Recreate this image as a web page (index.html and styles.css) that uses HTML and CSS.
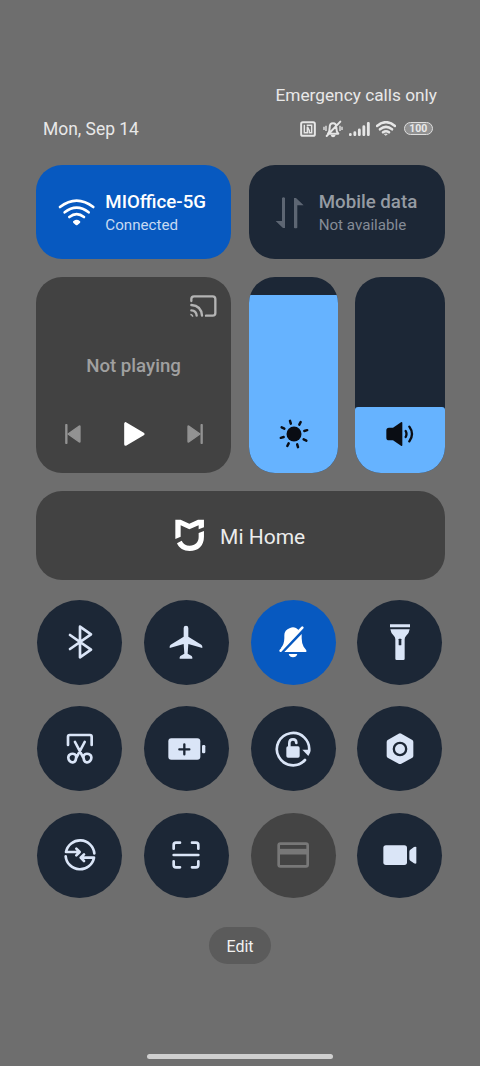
FILE: index.html
```html
<!DOCTYPE html>
<html lang="en">
<head>
<meta charset="utf-8">
<title>Control center</title>
<link rel="stylesheet" href="styles.css">
</head>
<body>
<main class="screen">
  <header class="header">
    <div class="carrier">Emergency calls only</div>
    <div class="status-row">
      <div class="date">Mon, Sep 14</div>
      <div class="status-icons">
        <svg class="i-nfc" viewBox="0 0 48 48"><rect x="3.5" y="3.5" width="41" height="41" rx="5" fill="none" stroke="#e6e6e6" stroke-width="6"/><path d="M13 11V35H22V17L28 29M20 13H35V35H28V27" fill="none" stroke="#e6e6e6" stroke-width="4.500"/></svg>
        <svg class="i-mute" viewBox="0 0 60 54"><path d="M15 41Q20 35 20 23Q20 10 30 10Q40 10 40 23Q40 35 46 41ZM52 5L11 48" fill="none" stroke="#e6e6e6" stroke-width="6" stroke-linecap="round" stroke-linejoin="round"/><path d="M23 45H38Q36 52 30 52Q25 52 23 45Z" fill="#e6e6e6"/><path d="M9 17V33M3 20V30M51 17V33M57 20V30" stroke="#e6e6e6" stroke-width="4"/></svg>
        <svg class="i-signal" viewBox="0 0 63 42" stroke="#e6e6e6" stroke-width="8.500" stroke-linecap="round"><path d="M4 37.500V38M17.500 32V38M31 24V38M44.500 14V38M58 4V38"/></svg>
        <svg class="i-wifi" viewBox="0 0 60 45" fill="none" stroke="#e6e6e6" stroke-width="7.500" stroke-linecap="round"><path d="M3 15Q30 -8 57 15M12 25Q30 10 48 25M21 34Q30 27 39 34"/><path d="M26 39H34L30 43Z" fill="#e6e6e6" stroke-width="2"/></svg>
        <span class="battery">100</span>
      </div>
    </div>
  </header>

  <section class="cards">
    <div class="card network on">
      <svg class="net-icon" viewBox="-56 -44 112 88" fill="none" stroke="#fff" stroke-width="8" stroke-linecap="round"><path d="M-50 -17Q0 -55 50 -17M-36 -1Q0 -29 36 -1M-22 13Q0 -4 22 13"/><path d="M-7 28Q0 23 7 28L0 34Z" fill="#fff" stroke-linejoin="round"/></svg>
      <div class="net-text"><div class="net-title">MIOffice-5G</div><div class="net-sub">Connected</div></div>
    </div>
    <div class="card network off">
      <svg class="net-icon" viewBox="-58 -44 112 88" fill="#5d6673"><path d="M-25 -44Q-20 -48 -16 -44V46H-22L-44 25H-25ZM11 45V-44H17L40 -22H21V45Q16 49 11 45Z"/></svg>
      <div class="net-text"><div class="net-title">Mobile data</div><div class="net-sub">Not available</div></div>
    </div>
    <div class="card media">
      <svg class="cast" viewBox="0 0 80 66" fill="none" stroke="#b4b4b4" stroke-width="7" stroke-linecap="round"><path d="M4 18V12Q4 4 12 4H68Q76 4 76 12V54Q76 62 68 62H48"/><path d="M4 30Q34 32 36 62M4 46Q19 47 20 62"/><path d="M1 56Q10 57 10 65H6Q5 61 1 61Z" fill="#b4b4b4" stroke="none"/></svg>
      <div class="media-title">Not playing</div>
      <div class="controls">
        <svg class="skip" viewBox="0 0 48 60"><path d="M4 3V57" stroke="#929292" stroke-width="7" stroke-linecap="round"/><path d="M9 30L43 6Q45 5 45 8V52Q45 55 43 54Z" fill="#929292" stroke="#929292" stroke-width="4" stroke-linejoin="round"/></svg>
        <svg class="play" viewBox="0 0 62 72"><path d="M5 5V67L57 36Z" fill="#fff" stroke="#fff" stroke-width="9" stroke-linejoin="round"/></svg>
        <svg class="skip" viewBox="0 0 48 60"><path d="M44 3V57" stroke="#929292" stroke-width="7" stroke-linecap="round"/><path d="M39 30L5 6Q3 5 3 8V52Q3 55 5 54Z" fill="#929292" stroke="#929292" stroke-width="4" stroke-linejoin="round"/></svg>
      </div>
    </div>
    <div class="sliders">
      <div class="card slider"><div class="fill bright">
        <svg class="slider-icon" viewBox="-45 -45 90 90"><circle r="22.500" fill="#0a0d14"/><path d="M-9.500 -31L-12 -39.500M-29 -16L-37 -20M-31 9L-39.500 11.500M-16 28L-20 36M9.500 31L12 39.500M29 16L37 20M31 -9L39.500 -11.500M16 -28L20 -36" stroke="#0a0d14" stroke-width="7.500" stroke-linecap="round"/></svg>
      </div></div>
      <div class="card slider"><div class="fill volume">
        <svg class="slider-icon" viewBox="-45 -45 90 90"><path d="M-33 -19H-21L3 -35Q7 -38 7 -33V33Q7 38 3 35L-21 19H-33Q-41 19 -41 11V-11Q-41 -19 -33 -19Z" fill="#0a0d14"/><path d="M17 -9Q22 0 17 9M28 -22Q44 0 28 22" fill="none" stroke="#0a0d14" stroke-width="7" stroke-linecap="round"/></svg>
      </div></div>
    </div>
    <div class="card home">
      <svg class="mi" viewBox="0 0 88 98"><path d="M1 2H17L43 14L69 2H87V25L71 31V19L43 31L17 19V53L1 60Z" fill="#fff"/><path d="M71 42L87 36V53C87 80 70 96 44 96C26 96 12 88 6 73L20 65C25 76 33 80 44 80C61 80 71 70 71 54Z" fill="#fff"/></svg>
      <span>Mi Home</span>
    </div>
  </section>

  <section class="toggles">
    <div class="toggle"><svg viewBox="-72 -72 144 144"><path class="line" d="M-30 -21L33 23L0 46V-46L33 -23L-30 21"/></svg></div>
    <div class="toggle"><svg viewBox="-72 -72 144 144"><path class="solid" d="M-7 -42Q-7 -49 0 -49Q7 -49 7 -42V-16L46 8Q50 11 49 18L7 6L5 35L17 42Q20 45 19 50H-19Q-20 45 -17 42L-5 35L-7 6L-49 18Q-50 11 -46 8L-7 -16Z"/></svg></div>
    <div class="toggle active"><svg viewBox="-72 -72 144 144"><path class="solid" d="M-36 18Q-26 6 -26 -12V-20Q-26 -36 -9 -42Q0 -47 9 -42L17 -36L-30 22ZM26 -24V-11Q26 4 32 14L40 25V30H-26ZM-13 36H13Q10 46 0 46Q-10 46 -13 36Z"/><path class="line" d="M-37 26L28 -43"/></svg></div>
    <div class="toggle"><svg viewBox="-72 -72 144 144"><path class="solid" d="M-30 -53H30V-44H-30ZM-29 -38H29Q28 -27 18 -18Q14 -14 14 -8V50Q14 54 10 54H-10Q-14 54 -14 50V-8Q-14 -14 -18 -18Q-28 -27 -29 -38Z"/><rect class="hole" x="-4" y="-10" width="8" height="20" rx="2"/></svg></div>

    <div class="toggle"><svg viewBox="-72 -72 144 144"><path class="line" d="M-36 -12V-37Q-36 -42 -31 -42H30Q35 -42 35 -37V-12M-15 -21L11 28M14 -21L-12 28M11 28C8 15 18 13 26 15C36 18 36 30 30 36C24 42 12 42 11 28ZM-12 28C-9 15 -19 13 -27 15C-37 18 -37 30 -31 36C-25 42 -13 42 -12 28Z"/></svg></div>
    <div class="toggle"><svg viewBox="-72 -72 144 144"><rect class="solid" x="-53" y="-32" width="96" height="64" rx="9"/><rect class="solid" x="48" y="-12" width="10" height="25" rx="4"/><path class="cut" d="M-20 1H10M-5 -14V16"/></svg></div>
    <div class="toggle"><svg viewBox="-72 -72 144 144"><path class="line" d="M36 33A48.500 48.500 0 1 1 48 8"/><path class="solid" d="M28 2H52Q52 13 46 21Z"/><rect class="solid" x="-20" y="-8" width="40" height="34" rx="5"/><path class="line" d="M-11 -8V-17Q-11 -29 0 -29Q10 -29 10 -18"/></svg></div>
    <div class="toggle"><svg viewBox="-72 -72 144 144"><path class="solid" d="M-4 -46Q0 -48 4 -46L37 -27Q40 -25 40 -21V20Q40 24 37 26L4 44Q0 46 -4 44L-37 26Q-40 24 -40 20V-21Q-40 -25 -37 -27Z"/><circle class="cut" r="18.500"/></svg></div>

    <div class="toggle"><svg viewBox="-72 -72 144 144"><path class="line" d="M43 -5A43 43 0 0 0 -42 -9H-3M-11 -19L-1 -9L-11 1M-43 4A43 43 0 0 0 42 8H3M12 -2L2 8L12 18"/></svg></div>
    <div class="toggle"><svg viewBox="-72 -72 144 144"><path class="line" d="M-37 -19V-30Q-37 -37 -30 -37H-18M18 -37H30Q37 -37 37 -30V-19M37 19V30Q37 37 30 37H18M-18 37H-30Q-37 37 -37 30V19M-37 0H37"/></svg></div>
    <div class="toggle disabled"><svg viewBox="-72 -72 144 144"><rect x="-43" y="-34" width="87" height="68" rx="5" fill="none" stroke="#787878" stroke-width="8"/><path d="M-43 -10H43" stroke="#787878" stroke-width="17"/></svg></div>
    <div class="toggle"><svg viewBox="-72 -72 144 144"><rect class="solid" x="-50" y="-29" width="71" height="59" rx="8"/><path class="solid" d="M28 -10Q28 -14 31 -16L42 -24Q46 -26 49 -24V25Q46 27 42 25L31 17Q28 15 28 11Z"/></svg></div>
  </section>

  <button class="edit">Edit</button>
  <div class="home-bar"></div>
</main>
</body>
</html>
```
FILE: styles.css
```css
* { box-sizing: border-box; }
body { margin: 0; background: #6e6e6e; font-family: Roboto, "Liberation Sans", sans-serif; }
svg { display: block; flex: none; }
.screen { width: 480px; height: 1066px; padding: 83px 35.5px 7px; display: flex; flex-direction: column; overflow: hidden; }
.header { height: 82px; padding: 0 7.5px; color: #e8e8e8; }
.carrier { height: 24px; line-height: 24px; text-align: right; font-size: 17.3px; }
.status-row { display: flex; justify-content: space-between; height: 43px; padding-right: 4.500px; }
.date { font-size: 17.450px; line-height: 44px; }
.status-icons { display: flex; align-items: center; height: 43px; }
.i-nfc { width: 16px; height: 16px; }
.i-mute { width: 20px; height: 18px; margin-left: 7px; }
.i-signal { width: 21px; height: 14px; margin-left: 6.500px; }
.i-wifi { width: 20px; height: 15px; margin-left: 6px; }
.battery { width: 28.500px; height: 13px; margin-left: 8px; border: 1.500px solid #dedede; border-radius: 7px; background: #919191; font-size: 10.500px; font-weight: 700; line-height: 11.500px; text-align: center; }

.cards { display: grid; grid-template-columns: 1fr 1fr; grid-template-rows: 94.300px 195.700px 89.300px; gap: 17.800px; }
.card { border-radius: 26px; background: #424242; overflow: hidden; }
.network { display: flex; align-items: center; padding-left: 22.500px; gap: 10px; }
.network.on { background: #0759c0; color: #fff; }
.network.off { background: #1c2736; color: #959ba3; }
.net-icon { width: 37.300px; height: 29.300px; overflow: visible; }
.net-text { padding-top: 3px; }
.net-title { font-size: 18.700px; font-weight: 500; line-height: 23px; }
.net-sub { font-size: 15.150px; line-height: 22px; color: #c6d9f2; }
.off .net-sub { color: #858c96; }
.media { display: flex; flex-direction: column; padding: 17.700px 28.500px 0 29px; }
.cast { width: 26.700px; height: 22px; margin-left: auto; margin-right: -14px; }
.media-title { margin-top: 36px; line-height: 26px; font-size: 18.700px; font-weight: 500; text-align: center; color: #a0a0a0; }
.controls { display: flex; justify-content: space-between; align-items: center; height: 24px; margin-top: 43.300px; }
.skip { width: 16px; height: 20px; }
.play { width: 20.700px; height: 24px; margin-left: 2px; }
.sliders { display: grid; grid-template-columns: 1fr 1fr; gap: 17.500px; }
.slider { background: #1c2736; display: flex; flex-direction: column; justify-content: flex-end; }
.fill { background: #66b3ff; display: flex; justify-content: center; align-items: flex-end; padding: 0 0 24px 1px; }
.bright { height: 178px; }
.volume { height: 65.300px; border-radius: 3px 3px 0 0; }
.slider-icon { width: 30px; height: 30px; }
.home { grid-column: 1 / 3; display: flex; justify-content: center; align-items: center; gap: 16px; padding-top: 1px; font-size: 21px; color: #ececec; }
.home span { padding-top: 2px; }
.mi { width: 29.300px; height: 32.700px; }

.toggles { display: grid; grid-template-columns: repeat(4, 85px); gap: 21.500px 21.700px; margin: 19.800px 0 0 1.800px; }
.toggle { width: 85px; height: 85px; border-radius: 50%; background: #1c2736; display: flex; align-items: center; justify-content: center; color: #dae5f7; }
.toggle svg { width: 48px; height: 48px; }
.active { background: #0759c0; color: #fff; }
.disabled { background: #444; }
.line { fill: none; stroke: currentColor; stroke-width: 8; stroke-linecap: round; stroke-linejoin: round; }
.solid { fill: currentColor; }
.hole { fill: #1c2736; }
.cut { fill: none; stroke: #1c2736; stroke-width: 7; stroke-linecap: round; }

.edit { align-self: center; width: 62px; height: 37px; margin: 29.500px 0 0; padding: 2px 0 0; border: 0; border-radius: 19px; background: #5b5b5b; color: #f2f2f2; font: 16px/35px Roboto, "Liberation Sans", sans-serif; }
.home-bar { align-self: center; width: 186px; height: 5px; margin-top: auto; border-radius: 3px; background: #cfcfcf; }
```
